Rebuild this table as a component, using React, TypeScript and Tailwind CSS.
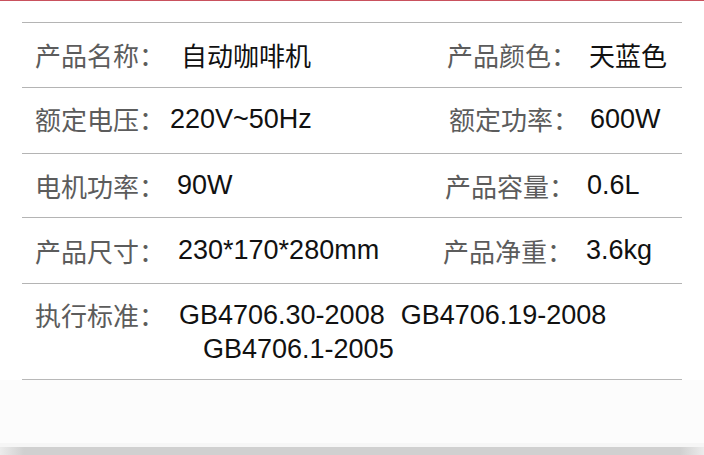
import React from "react";

const cjk = "font-['Noto_Sans_CJK_SC',sans-serif]";
const val = "font-['Liberation_Sans','Noto_Sans_CJK_SC',sans-serif]";

function Label({ children, className = "" }: { children: React.ReactNode; className?: string }) {
  return (
    <span className={`${cjk} text-[26px] leading-none text-[#5c5c5c] whitespace-nowrap ${className}`}>
      {children}
    </span>
  );
}

function Value({ children }: { children: React.ReactNode }) {
  return (
    <span className={`${val} text-[27px] leading-none text-[#111111] whitespace-nowrap`}>
      {children}
    </span>
  );
}

function CnValue({ children }: { children: React.ReactNode }) {
  return (
    <span className={`${cjk} text-[26px] leading-none text-[#111111] whitespace-nowrap`}>
      {children}
    </span>
  );
}

export default function App() {
  return (
    <div className="w-[704px] h-[455px] bg-white flex flex-col overflow-hidden">
      <div className="h-[1px] bg-[#c9515d]" />
      <div className="mx-[22px] mt-[21px] border-t border-[#b4b4b4] flex flex-col">
        {/* Row 1 */}
        <div className="h-[65px] border-b border-[#b4b4b4] flex items-center">
          <div className="w-[425px] flex items-center pl-[13px]">
            <Label className="w-[146px]">产品名称：</Label>
            <CnValue>自动咖啡机</CnValue>
          </div>
          <div className="flex items-center">
            <Label className="w-[142px]">产品颜色：</Label>
            <CnValue>天蓝色</CnValue>
          </div>
        </div>
        {/* Row 2 */}
        <div className="h-[66px] border-b border-[#b4b4b4] flex items-center">
          <div className="w-[425px] flex items-center pl-[13px] pb-[3px]">
            <Label className="w-[135px]">额定电压：</Label>
            <Value>220V~50Hz</Value>
          </div>
          <div className="flex items-center pl-[2px] pb-[3px]">
            <Label className="w-[141px]">额定功率：</Label>
            <Value>600W</Value>
          </div>
        </div>
        {/* Row 3 */}
        <div className="h-[64px] border-b border-[#b4b4b4] flex items-center">
          <div className="w-[423px] flex items-center pl-[13px]">
            <Label className="w-[142px]">电机功率：</Label>
            <Value>90W</Value>
          </div>
          <div className="flex items-center">
            <Label className="w-[142px]">产品容量：</Label>
            <Value>0.6L</Value>
          </div>
        </div>
        {/* Row 4 */}
        <div className="h-[66px] border-b border-[#b4b4b4] flex items-center">
          <div className="w-[421px] flex items-center pl-[13px]">
            <Label className="w-[143px]">产品尺寸：</Label>
            <Value>230*170*280mm</Value>
          </div>
          <div className="flex items-center">
            <Label className="w-[143px]">产品净重：</Label>
            <Value>3.6kg</Value>
          </div>
        </div>
        {/* Row 5 */}
        <div className="h-[96px] border-b border-[#b8b8b8] flex items-start pt-[14px] pl-[13px]">
          <span className={`${cjk} text-[26px] leading-[34px] text-[#5c5c5c] whitespace-nowrap w-[144px]`}>
            执行标准：
          </span>
          <div className="flex flex-col">
            <div className="flex">
              <span className={`${val} text-[27px] leading-[34px] text-[#111111] whitespace-nowrap`}>
                GB4706.30-2008
              </span>
              <span className={`${val} text-[27px] leading-[34px] text-[#111111] whitespace-nowrap ml-[16px]`}>
                GB4706.19-2008
              </span>
            </div>
            <span className={`${val} text-[27px] leading-[34px] text-[#111111] whitespace-nowrap ml-[24px]`}>
              GB4706.1-2005
            </span>
          </div>
        </div>
      </div>
      <div className="flex-1 bg-[#fcfcfc]" />
      <div className="h-[4px] bg-[#f6f6f6]" />
      <div className="h-[8px] flex">
        <div className="w-[24px] bg-gradient-to-r from-[#ececec] to-[#d0d0d0]" />
        <div className="flex-1 bg-[#d0d0d0]" />
        <div className="w-[24px] bg-gradient-to-l from-[#ececec] to-[#d0d0d0]" />
      </div>
    </div>
  );
}
